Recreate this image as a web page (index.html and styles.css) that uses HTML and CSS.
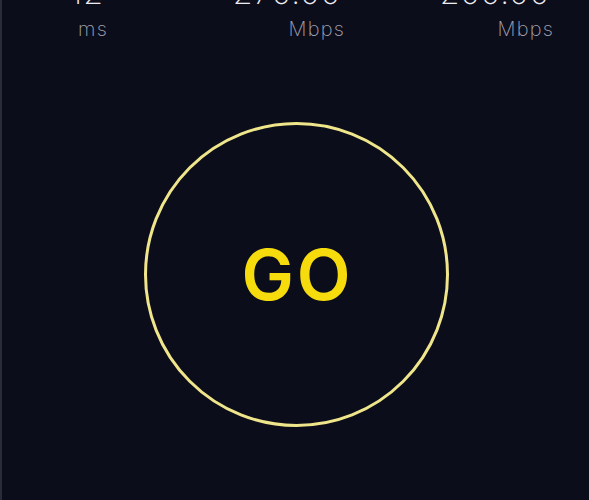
FILE: index.html
```html
<!DOCTYPE html>
<html lang="en">
<head>
<meta charset="utf-8">
<title>Speed test</title>
<link rel="stylesheet" href="styles.css">
</head>
<body>
<main class="screen">
  <section class="stats">
    <div class="stat">
      <div class="num">12</div>
      <div class="unit">ms</div>
    </div>
    <div class="stat">
      <div class="num">270.00</div>
      <div class="unit">Mbps</div>
    </div>
    <div class="stat">
      <div class="num">200.00</div>
      <div class="unit">Mbps</div>
    </div>
  </section>
  <section class="go-wrap">
    <button class="go" type="button">GO</button>
  </section>
</main>
</body>
</html>
```
FILE: styles.css
```css
html, body {
  margin: 0;
  padding: 0;
  background: #0c0d1b;
  height: 100%;
  overflow: hidden;
}
.screen {
  display: flow-root;
  height: 500px;
  border-left: 2px solid #2a2b37;
  font-family: Inter, "Noto Sans", sans-serif;
  box-sizing: border-box;
  overflow: hidden;
}
.stats {
  display: grid;
  grid-template-columns: 106px 237px 209px;
  margin-top: -23px;
}
.stat {
  text-align: right;
}
.num {
  padding-right: 4px;
  font-size: 32px;
  line-height: 32px;
  font-weight: 250;
  letter-spacing: 1px;
  color: #ececf2;
}
.unit {
  margin-top: 10px;
  font-size: 20px;
  line-height: 20px;
  font-weight: 200;
  letter-spacing: 1.2px;
  color: #a3a3b2;
}
.go-wrap {
  display: flex;
  justify-content: center;
  margin-top: 83px;
  padding-left: 1px;
}
.go {
  width: 305px;
  height: 305px;
  border-radius: 50%;
  border: 3px solid #efe58a;
  background: transparent;
  box-sizing: border-box;
  display: flex;
  align-items: center;
  justify-content: center;
  padding: 0 0 0 3px;
  font-family: Inter, "Noto Sans", sans-serif;
  font-size: 70px;
  line-height: 70px;
  font-weight: 600;
  letter-spacing: 3px;
  color: #f6dc0c;
  cursor: pointer;
}
```
